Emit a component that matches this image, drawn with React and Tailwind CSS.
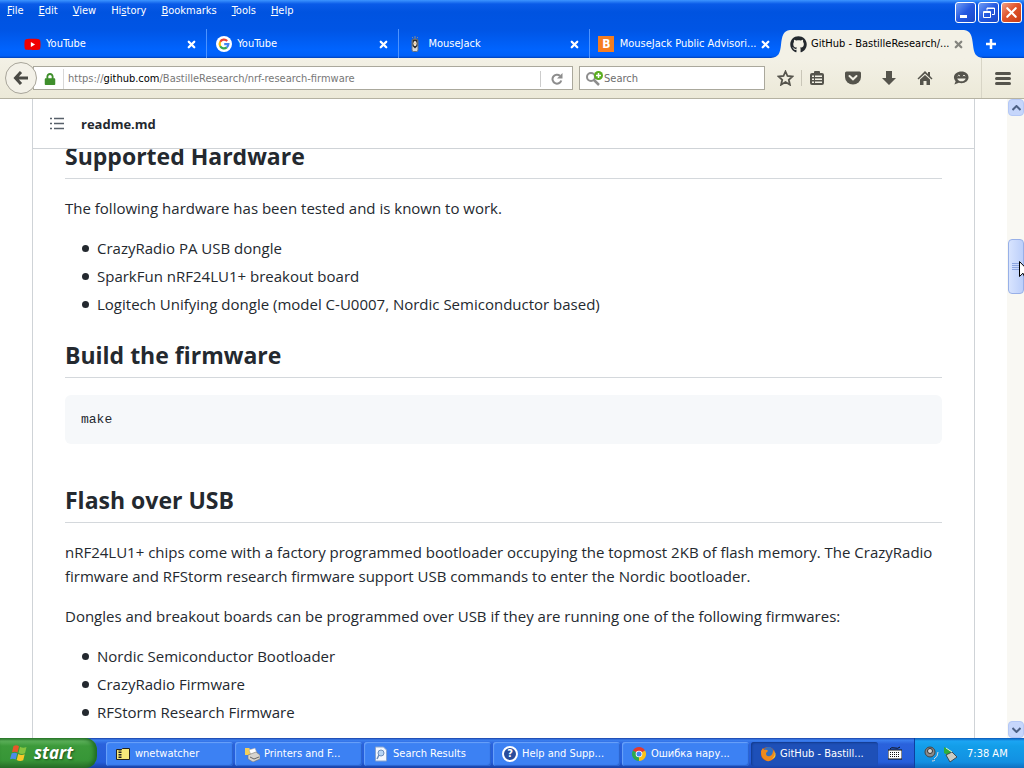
import React from 'react';
import { X } from 'lucide-react';
import { FaGithub, FaYoutube, FaLock } from 'react-icons/fa';

const menus = ['File', 'Edit', 'View', 'History', 'Bookmarks', 'Tools', 'Help'];
const accessKeys = { History: 2 };

const YouTubeIcon = () => <FaYoutube size={17} color="#f00000" className="bg-[linear-gradient(#fff,#fff)] bg-[length:6px_6px] bg-center bg-no-repeat" />;

const GoogleIcon = () => (
  <svg width="16" height="16" viewBox="0 0 16 16">
    <circle cx="8" cy="8" r="8" fill="#fff" />
    <g fill="none" strokeWidth="2.2">
      <path d="M4.2 5.8A4.4 4.4 0 0 1 11.2 4.9" stroke="#ea4335" />
      <path d="M4.2 5.8A4.4 4.4 0 0 0 4.2 10.2" stroke="#fbbc05" />
      <path d="M4.2 10.2A4.4 4.4 0 0 0 10.8 11.4" stroke="#34a853" />
      <path d="M8.2 8.1H12.4A4.4 4.4 0 0 1 10.8 11.4" stroke="#4285f4" />
    </g>
  </svg>
);

const MouseIcon = () => (
  <svg width="16" height="16" viewBox="0 0 16 16">
    <path d="M8 0v3M6 2l-1-1M10 2l1-1" stroke="#8a8a8a" />
    <rect x="5" y="3" width="6" height="12.5" rx="1.5" fill="#d8d8d8" stroke="#66707c" />
    <path d="M5.5 3.5h5V10L8 12.5 5.5 10z" fill="#2b2b2b" />
    <ellipse cx="8" cy="7.5" rx="1.6" ry="2.5" fill="#fff" />
    <path d="M7.5 6.5h1v2h-1z" fill="#d68b2c" />
  </svg>
);

const BloggerIcon = () => (
  <span className="flex size-4 items-center justify-center bg-[#f57d20] text-xs font-bold text-white">B</span>
);

const tabs = [
  { title: 'YouTube', icon: <YouTubeIcon /> },
  { title: 'YouTube', icon: <GoogleIcon /> },
  { title: 'MouseJack', icon: <MouseIcon /> },
  { title: 'MouseJack Public Advisori...', icon: <BloggerIcon /> },
];

const TitleBar = () => (
  <header className="relative bg-[linear-gradient(180deg,#3d95ff_0px,#0a5be8_4px,#0053e0_12px,#0055e5_30px,#0064ff_50px,#0060f8_56px,#0040b8_100%)] text-white">
    <div className="flex h-[29px] items-start justify-between">
      <nav className="flex gap-[15px] pt-[3px] pl-[7px]">
        {menus.map((name) => {
          const k = accessKeys[name] || 0;
          return (
            <button key={name} className="leading-[15px]">
              {name.slice(0, k)}
              <span className="underline">{name[k]}</span>
              {name.slice(k + 1)}
            </button>
          );
        })}
      </nav>
      <div className="flex gap-[2px] pt-[2px] pr-[2px]">
        <button aria-label="Minimize" className="flex size-[21px] items-end rounded-[3px] border border-white bg-[linear-gradient(135deg,#6f9cf5,#2458e0_50%,#1848c8)] pb-1 pl-1">
          <span className="h-[3px] w-[7px] bg-white" />
        </button>
        <button aria-label="Restore" className="flex size-[21px] items-center justify-center rounded-[3px] border border-white bg-[linear-gradient(135deg,#6f9cf5,#2458e0_50%,#1848c8)]">
          <svg width="12" height="12" viewBox="0 0 12 12" fill="none" stroke="#fff">
            <path d="M4 3.5V1h7.5v6.5H9M4 1.5h7" />
            <path d="M.5 4.5h7v6h-7zM.5 5.5h7" />
          </svg>
        </button>
        <button aria-label="Close" className="flex size-[21px] items-center justify-center rounded-[3px] border border-white bg-[linear-gradient(135deg,#f0a088,#e0542c_45%,#c83c14)]">
          <X size={17} strokeWidth={3} />
        </button>
      </div>
    </div>

    <div className="flex h-[29px] items-stretch pl-4">
      {tabs.map((tab, i) => (
        <div
          key={i}
          className={`flex min-w-0 flex-1 items-center pt-px pr-[9px] pl-2 ${i < 3 ? 'border-r border-[#4d93ff]' : ''}`}
        >
          <button className="flex min-w-0 flex-1 items-center gap-[5px] text-left whitespace-nowrap">
            <span className="flex w-[17px] shrink-0 justify-center">{tab.icon}</span>
            {tab.title}
          </button>
          <button aria-label="Close tab">
            <X size={11} strokeWidth={5} />
          </button>
        </div>
      ))}
      <div className="-ml-[9px] flex w-[212px] shrink-0 items-stretch text-black">
        <svg width="19" height="29" viewBox="0 0 19 29" className="shrink-0">
          <path d="M0 29C8 28 9 24 10 16 11 7 12 2 19 1V29z" fill="#f3f1e6" />
        </svg>
        <div className="mt-px flex min-w-0 flex-1 items-center bg-[#f3f1e6]">
          <button className="flex min-w-0 flex-1 items-center gap-1 text-left whitespace-nowrap">
            <FaGithub size={17} className="shrink-0 text-[#24292e]" />
            GitHub - BastilleResearch/...
          </button>
          <button aria-label="Close tab" className="text-[#85857f]">
            <X size={11} strokeWidth={5} />
          </button>
        </div>
        <svg width="19" height="29" viewBox="0 0 19 29" className="shrink-0">
          <path d="M19 29C11 28 10 24 9 16 8 7 7 2 0 1V29z" fill="#f3f1e6" />
        </svg>
      </div>
      <button aria-label="New tab" className="mr-[25px] flex w-4 shrink-0 items-center justify-center">
        <svg width="12" height="12" viewBox="0 0 12 12">
          <path d="M6 1v10M1 6h10" stroke="#fff" strokeWidth="2.5" />
        </svg>
      </button>
    </div>
  </header>
);

const BookmarksIcon = () => (
  <svg width="16" height="16" viewBox="0 0 16 16">
    <path d="M5 3V2q0-1 1-1h4q1 0 1 1v1h2q2 0 2 2v8q0 2-2 2H3q-2 0-2-2V5q0-2 2-2z" fill="#55544c" />
    <path d="M3 5.500h2v1.500H3zM6 5.500h7v1.500H6zM3 8.500h2v1.500H3zM6 8.500h7v1.500H6zM3 11.500h2v1.500H3zM6 11.500h7v1.500H6z" fill="#f2f0e4" />
  </svg>
);

const PocketIcon = () => (
  <svg width="16" height="16" viewBox="0 0 16 16">
    <path d="M1.500 1.500h13q1.500 0 1.500 1.500v4a8 7.500 0 0 1-16 0V3q0-1.500 1.500-1.500z" fill="#55544c" />
    <path d="M4.500 6 8 9.300 11.500 6" fill="none" stroke="#f2f0e4" strokeWidth="2" strokeLinecap="round" />
  </svg>
);

const DownloadIcon = () => (
  <svg width="16" height="16" viewBox="0 0 16 16">
    <path d="M5 1h6v7h4l-7 7-7-7h4z" fill="#55544c" />
  </svg>
);

const HomeIcon = () => (
  <svg width="16" height="16" viewBox="0 0 16 16">
    <path d="M8 1 .5 8.500l1 1L8 3.500l6.500 6 1-1L13 6V2h-2v2z" fill="#55544c" />
    <path d="M8 5 3 9.500V15h3.500v-4h3v4H13V9.500z" fill="#55544c" />
  </svg>
);

const ChatIcon = () => (
  <svg width="16" height="16" viewBox="0 0 17 16">
    <path d="M9 1c4.500 0 7.500 2.800 7.500 6.300S13.500 13.500 9 13.500c-1 0-2-.1-2.800-.4L1.500 15l1.300-3.500C1.700 10.300 1 8.900 1 7.300 1 3.800 4.500 1 9 1z" fill="#55544c" />
    <path d="M4.500 8.500h9q-1 3-4.500 3t-4.500-3z" fill="#f2f0e4" />
    <path d="M5 6q1-2 2.500 0M10.500 6q1-2 2.500 0" fill="none" stroke="#f2f0e4" />
  </svg>
);

const StarIcon = () => (
  <svg width="17" height="16" viewBox="0 0 17 16">
    <path d="M8.500 1.500l2 4.500 5 .5-3.700 3.300 1.100 4.900-4.400-2.600-4.400 2.600 1.100-4.900L1.500 6.500l5-.5z" fill="none" stroke="#55544c" strokeWidth="1.8" />
  </svg>
);

const toolbar = [
  { label: 'Bookmarks list', icon: <BookmarksIcon /> },
  { label: 'Pocket', icon: <PocketIcon /> },
  { label: 'Downloads', icon: <DownloadIcon /> },
  { label: 'Home', icon: <HomeIcon /> },
  { label: 'Chat', icon: <ChatIcon /> },
];

const NavBar = () => (
  <div className="flex h-[41px] items-center border-b border-[#b5b2a2] bg-[linear-gradient(#f3f1e6,#ece9d8)] pl-[5px]">
    <button aria-label="Back" className="relative z-10 flex size-8 shrink-0 items-center justify-center rounded-full border border-[#a8a59a] bg-[#f3f1e8]">
      <svg width="16" height="14" viewBox="0 0 16 14" fill="none" stroke="#4a4a45" strokeWidth="3">
        <path d="M8 1 2.500 7 8 13M3 7h12" />
      </svg>
    </button>
    <div className="-ml-1 flex h-6 flex-1 items-center border border-[#aaa89c] bg-white pt-px pl-[10px]">
      <FaLock size={12} className="shrink-0 text-[#3f8f2c]" />
      <span className="ml-[7px] h-5 border-l border-[#d8d8d8]" />
      <div className="min-w-0 flex-1 truncate pl-1 text-[#777]">
        https://<span className="text-black">github.com</span>/BastilleResearch/nrf-research-firmware
      </div>
      <button aria-label="Reload" className="flex h-4 w-8 items-center justify-center border-l border-[#ccc]">
        <svg width="12" height="12" viewBox="0 0 12 12" fill="none" stroke="#8d8d8d" strokeWidth="2">
          <path d="M10.300 7.500A4.500 4.500 0 1 1 9 2.800" />
          <path d="M11.500 0v5.500H6z" fill="#8d8d8d" stroke="none" />
        </svg>
      </button>
    </div>
    <label className="ml-[6px] flex h-6 w-[186px] shrink-0 items-center border border-[#aaa89c] bg-white pt-px pl-[6px]">
      <svg width="18" height="16" viewBox="0 0 18 16" className="shrink-0">
        <circle cx="5" cy="6" r="4" fill="none" stroke="#8d8d8d" strokeWidth="2" />
        <path d="M8 9l5 5" stroke="#8d8d8d" strokeWidth="2.5" />
        <circle cx="12.5" cy="4.5" r="4.5" fill="#5aad1f" />
        <path d="M12.500 2v5M10 4.500h5" stroke="#fff" strokeWidth="1.5" />
      </svg>
      <input aria-label="Search" placeholder="Search" className="w-full min-w-0 outline-none placeholder:text-[#6d6d6d]" />
    </label>
    <button aria-label="Bookmark this page" className="ml-3"><StarIcon /></button>
    <div className="ml-[7px] flex items-center gap-5 border-l border-[#c9c6b8] pl-[7px]">
      {toolbar.map((t) => (
        <button key={t.label} aria-label={t.label}>{t.icon}</button>
      ))}
    </div>
    <div className="ml-3 flex h-10 items-center border-l border-[#d8d5c6] pr-[13px] pl-[13px]">
      <button aria-label="Menu" className="flex flex-col gap-[2px]">
        <span className="h-[3px] w-4 rounded-xs bg-[#55544c]" />
        <span className="h-[3px] w-4 rounded-xs bg-[#55544c]" />
        <span className="h-[3px] w-4 rounded-xs bg-[#55544c]" />
      </button>
    </div>
  </div>
);

const Heading = ({ children }) => (
  <h2 className="mb-[17px] border-b border-[#d4d8dc] pb-[6px] text-[23px] leading-[31px] font-bold">{children}</h2>
);

const List = ({ items }) => (
  <ul className="flex flex-col gap-1 pl-[17px]">
    {items.map((item) => (
      <li key={item} className="flex items-center gap-2">
        <span className="size-[7px] shrink-0 rounded-full bg-[#24292f]" />
        {item}
      </li>
    ))}
  </ul>
);

const Readme = () => (
  <main className="mx-8 flex min-w-0 flex-1 flex-col border-x border-[#cfd3d7] font-['Open_Sans','Noto_Sans',sans-serif] text-[15px] leading-6 text-[#24292f]">
    <div className="relative z-10 flex h-[50px] shrink-0 items-center gap-4 border-b border-[#cfd3d7] bg-white pl-4 text-[13px] font-bold">
      <button aria-label="Outline">
        <svg width="16" height="14" viewBox="0 0 16 14" stroke="#57606a" strokeWidth="1.3">
          <path d="M5 1.500h10M5 6.500h10M5 11.500h10M1 1.500h2M1 6.500h2M1 11.500h2" />
        </svg>
      </button>
      <a href="#readme">readme.md</a>
    </div>
    <article id="readme" className="-mt-2 px-8">
      <Heading>Supported Hardware</Heading>
      <p className="mb-4">The following hardware has been tested and is known to work.</p>
      <List
        items={[
          'CrazyRadio PA USB dongle',
          'SparkFun nRF24LU1+ breakout board',
          'Logitech Unifying dongle (model C-U0007, Nordic Semiconductor based)',
        ]}
      />
      <div className="h-6" />
      <Heading>Build the firmware</Heading>
      <pre className="mb-[41px] rounded-md bg-[#f6f8fa] p-4 font-['Liberation_Mono',monospace] text-[13px] leading-[17px]">make</pre>
      <Heading>Flash over USB</Heading>
      <p className="mb-4">
        nRF24LU1+ chips come with a factory programmed bootloader occupying the topmost 2KB of flash memory. The CrazyRadio
        firmware and RFStorm research firmware support USB commands to enter the Nordic bootloader.
      </p>
      <p className="mb-4">Dongles and breakout boards can be programmed over USB if they are running one of the following firmwares:</p>
      <List items={['Nordic Semiconductor Bootloader', 'CrazyRadio Firmware', 'RFStorm Research Firmware']} />
    </article>
  </main>
);

const ScrollButton = ({ label, d }) => (
  <button aria-label={label} className="flex h-[17px] w-full shrink-0 items-center justify-center rounded-sm border border-[#b4c8f6] bg-[#c6d6fb]">
    <svg width="9" height="6" viewBox="0 0 9 6" fill="none" stroke="#4d6185" strokeWidth="2">
      <path d={d} />
    </svg>
  </button>
);

const ScrollBar = () => (
  <div className="relative flex w-[17px] shrink-0 flex-col bg-[#f9f8f3] pl-px">
    <ScrollButton label="Scroll up" d="M.5 5l4-4 4 4" />
    <div className="flex-[123]" />
    <div className="flex h-[55px] flex-col items-center justify-center gap-px rounded-sm border border-[#98b0e8] bg-[linear-gradient(90deg,#d8e4fe,#bccffa)]">
      {[0, 1, 2, 3].map((n) => (
        <span key={n} className="h-px w-2 bg-[#8ca5e0]" />
      ))}
    </div>
    <div className="flex-[426]" />
    <ScrollButton label="Scroll down" d="M.5 1l4 4 4-4" />
    <svg width="12" height="19" viewBox="0 0 12 19" className="absolute top-[162px] left-3">
      <path d="M.5.5v15l3.500-3.300 2.500 5.800 2.300-1-2.500-5.500H11z" fill="#fff" stroke="#000" />
    </svg>
  </div>
);

const FolderZipIcon = () => (
  <svg width="16" height="16" viewBox="0 0 16 16">
    <path d="M1.500 3.500h5l1-1h7v11h-13z" fill="#f5e87a" stroke="#222" />
    <path d="M5 3v11" stroke="#222" strokeWidth="3" strokeDasharray="1.500 1" />
  </svg>
);
const PrinterIcon = () => (
  <svg width="16" height="16" viewBox="0 0 16 16">
    <path d="M1 2h4l1 1h4v6H1z" fill="#f3cf5c" />
    <path d="M5 4l6-2 2 5-6 2z" fill="#fff" stroke="#99a" strokeWidth=".5" />
    <path d="M4 9l8-3 4 3v4l-7 3-5-3z" fill="#d7d4cf" stroke="#777" strokeWidth=".6" />
    <path d="M6 11l4 2 5-2" fill="none" stroke="#666" />
  </svg>
);
const SearchDocIcon = () => (
  <svg width="16" height="16" viewBox="0 0 16 16">
    <path d="M2.500 1h8l3 3v11h-11z" fill="#f4f8ff" stroke="#8aa4cc" />
    <circle cx="8" cy="7" r="3" fill="#b9d6f5" stroke="#6c8dbb" />
    <path d="M6 9l-2 4" stroke="#6c8dbb" strokeWidth="1.5" />
  </svg>
);
const HelpIcon = () => (
  <span className="flex size-4 items-center justify-center rounded-full border-2 border-white bg-[#2a4d9c] text-[11px] font-bold">?</span>
);
const ChromeIcon = () => (
  <svg width="16" height="16" viewBox="0 0 16 16">
    <path d="M8 8 1.900 4.500A7 7 0 0 1 14.100 4.500z" fill="#e33b2e" />
    <path d="M8 8l6.100-3.500A7 7 0 0 1 8 15z" fill="#fbc116" />
    <path d="M8 8v7A7 7 0 0 1 1.900 4.500z" fill="#2da94f" />
    <circle cx="8" cy="8" r="3.3" fill="#fff" />
    <circle cx="8" cy="8" r="2.5" fill="#4285f4" />
  </svg>
);
const FirefoxIcon = () => (
  <svg width="16" height="16" viewBox="0 0 16 16">
    <circle cx="8" cy="8" r="7" fill="#e66000" />
    <circle cx="8.5" cy="6" r="5" fill="#2f6fc4" />
    <path d="M1 5l2-3 1 2q3-1 4 1L6 7q0 4 4 3 3-1 3-6 3 4 1 8-3 4-7 3-6-2-6-10z" fill="#f08a1c" />
    <path d="M14 4q2 5-2 9 4-1 3.500-5.500z" fill="#ffcb2e" />
  </svg>
);

const tasks = [
  { title: 'wnetwatcher', icon: <FolderZipIcon /> },
  { title: 'Printers and F...', icon: <PrinterIcon /> },
  { title: 'Search Results', icon: <SearchDocIcon /> },
  { title: 'Help and Supp...', icon: <HelpIcon /> },
  { title: 'Ошибка нару...', icon: <ChromeIcon /> },
  { title: 'GitHub - Bastill...', icon: <FirefoxIcon />, active: true },
];

const TaskBar = () => (
  <footer className="flex h-[30px] shrink-0 items-stretch bg-[linear-gradient(180deg,#1941a5_0px,#3c80f0_2px,#2a62dc_6px,#245edb_24px,#1941a5_100%)] text-white">
    <button className="flex w-[97px] shrink-0 items-center gap-[5px] rounded-r-xl bg-[linear-gradient(180deg,#2f7d2f_0px,#5cb05a_3px,#3c9a3a_8px,#379637_22px,#2a6f2a_100%)] pl-[10px] font-['Open_Sans',sans-serif] shadow-[inset_-3px_0_4px_#1f6b22]">
      <svg width="19" height="18" viewBox="0 0 19 18">
        <path d="M3.500 2q3-1.500 5.500.3L7.500 8.500Q5 7 2 8.300z" fill="#e8562a" />
        <path d="M10 2.700q3 1.800 6.500.3L15 9.200q-3.300 1.500-6.500-.3z" fill="#86c440" />
        <path d="M1.700 9.300Q5 8 7.200 9.500L5.700 15.500Q3 14 0 15.300z" fill="#4c8ce8" />
        <path d="M8.200 10q3 1.700 6.500.3L13.200 16.300q-3.500 1.500-6.500-.3z" fill="#f8c828" />
      </svg>
      <span className="text-[17px] leading-5 font-bold italic [text-shadow:1px_1px_2px_#1c4f1c]">start</span>
    </button>
    <div className="flex min-w-0 flex-1 gap-[2px] pt-1 pr-9 pb-[2px] pl-[9px]">
      {tasks.map((t) => (
        <button
          key={t.title}
          className={`flex min-w-0 flex-1 items-center gap-1 rounded-[3px] pl-[9px] text-left whitespace-nowrap ${
            t.active ? 'bg-[#1e50b8] shadow-[inset_1px_1px_2px_#123a8c]' : 'bg-[#3c81f3] shadow-[inset_1px_1px_1px_#6ba2fa,inset_-1px_-1px_1px_#2a62cc]'
          }`}
        >
          <span className="shrink-0">{t.icon}</span>
          {t.title}
        </button>
      ))}
    </div>
    <svg width="14" height="14" viewBox="0 0 14 14" className="-ml-[26px] mr-3 shrink-0 self-center">
      <path d="M2 3q1-2 5-1 3 1 5-1" fill="none" stroke="#111" />
      <rect y="4" width="14" height="9" fill="#fff" stroke="#111" />
      <path d="M2 6.500h10M2 8.500h10M2 10.500h10" stroke="#111" strokeDasharray="1 1" />
    </svg>
    <div className="flex w-[110px] shrink-0 items-center border-l border-[#0d3f9e] bg-[linear-gradient(180deg,#0c59b9_0px,#1ba5f3_3px,#139ee9_8px,#1290e2_24px,#0f6fc0_100%)] pt-px pl-[9px]">
      <svg width="36" height="18" viewBox="0 0 36 18">
        <circle cx="6" cy="7" r="5" fill="#8b8b8b" stroke="#444" />
        <circle cx="6" cy="6" r="2.5" fill="#d8d8d8" stroke="#333" />
        <path d="M10 14q4-2 4-7M8 16q2 0 3-1" fill="none" stroke="#ddd" />
        <path d="M20 2l7 4-2 5-5-3z" fill="#2fae3a" />
        <path d="M22 10l6-3 5 5-7 5z" fill="#c9ccc4" stroke="#333" strokeWidth=".8" />
        <path d="M22 3l6 4" stroke="#dff5d8" />
      </svg>
      <time className="ml-[7px]">7:38 AM</time>
    </div>
  </footer>
);

const App = () => (
  <div className="flex h-screen flex-col overflow-hidden bg-white font-['DejaVu_Sans_Condensed','DejaVu_Sans',sans-serif] text-[11px] leading-4">
    <TitleBar />
    <NavBar />
    <div className="flex min-h-0 flex-1 overflow-hidden">
      <Readme />
      <ScrollBar />
    </div>
    <TaskBar />
  </div>
);

export default App;
